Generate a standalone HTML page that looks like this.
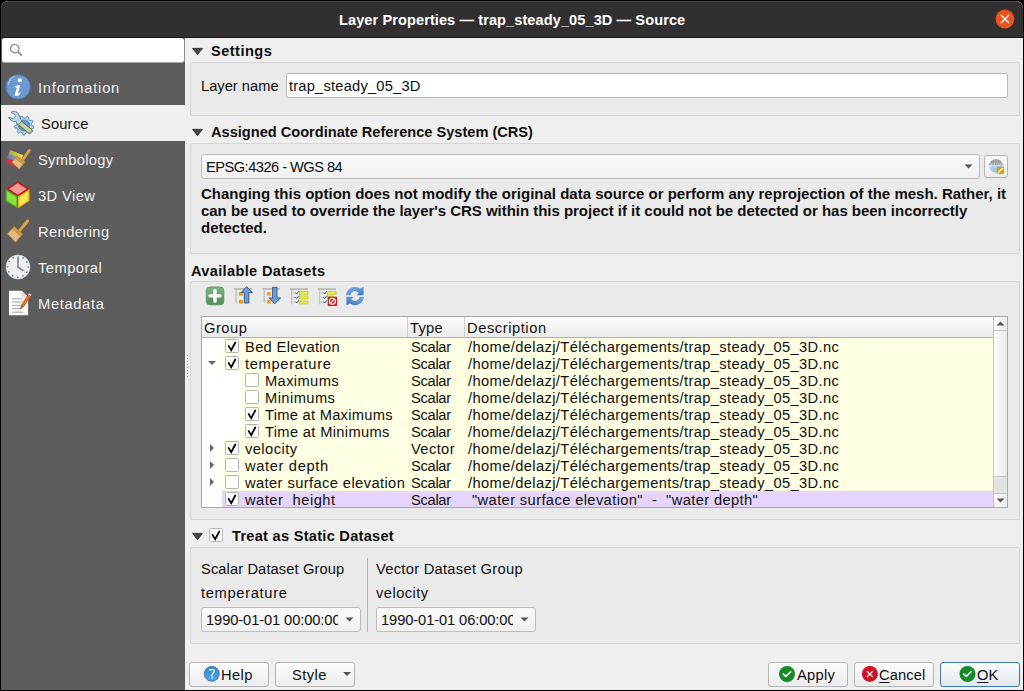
<!DOCTYPE html>
<html><head><meta charset="utf-8"><style>
*{box-sizing:border-box;margin:0;padding:0}
html,body{width:1024px;height:691px;overflow:hidden;background:#000}
body{position:relative;font-family:"Liberation Sans",sans-serif;font-size:14.7px;color:#101010}
.a{position:absolute}
.t{position:absolute;white-space:nowrap;line-height:1}
.b{font-weight:bold;font-size:14.6px}
.grp{position:absolute;background:#eaeaea;border:1px solid #d5d5d5;border-radius:2px}
.tri{position:absolute;width:12px;height:9px}
.inp{position:absolute;background:#fff;border:1px solid #b8b8b8;border-radius:2px}
.btn{position:absolute;background:linear-gradient(#fcfcfc,#ececec);border:1px solid #b5b5b5;border-radius:3px}
.combo{position:absolute;background:linear-gradient(#fbfbfb,#f0f0f0);border:1px solid #bcbcbc;border-radius:3px}
.darr{position:absolute;width:0;height:0;border-left:5px solid transparent;border-right:5px solid transparent;border-top:5px solid #555}
.st{color:#f2f2f2}
.cb{position:absolute;width:14px;height:14px;background:#fff;border:1px solid #b4b4b4;border-radius:1.5px}
.row{position:absolute;height:17px}
.yel{background:#ffffe4}
u{text-decoration-thickness:1px;text-underline-offset:2px}
</style></head><body>
<div class="a" style="left:1px;top:1px;width:1022px;height:689px;background:#efefef;border-radius:7px 7px 0 0"></div>
<div class="a" style="left:1px;top:1px;width:1022px;height:36px;background:#312f2f;border-top:1px solid #4a4848;border-radius:7px 7px 0 0"></div>
<div class="a" style="left:1px;top:37px;width:1022px;height:1px;background:#181818"></div>
<div class="t b" style="left:339px;top:13px;color:#fff;letter-spacing:0.07px">Layer Properties — trap_steady_05_3D — Source</div>
<svg class="a" style="left:990px;top:4px" width="30" height="30"><circle cx="15" cy="15" r="9.4" fill="#e95420"/><path d="M11 11L19 19M19 11L11 19" stroke="#fff" stroke-width="1.3"/></svg>
<div class="a" style="left:1px;top:38px;width:184px;height:652px;background:#5c5c5c"></div>
<div class="a" style="left:2px;top:38px;width:182px;height:25px;background:#fff;border-radius:3px;border-bottom:1px solid #a8a8a8"></div>
<div class="a" style="left:184px;top:38px;width:1px;height:24px;background:#8a8a8a"></div>
<svg class="a" style="left:8px;top:42px" width="18" height="18"><circle cx="6.8" cy="6.7" r="4.2" fill="none" stroke="#808080" stroke-width="1.2"/><path d="M10 9.8L13.8 13.6" stroke="#808080" stroke-width="1.6"/></svg>
<div class="a" style="left:1px;top:105px;width:184px;height:36px;background:#efefef"></div>
<div class="t st" style="left:38px;top:81px;letter-spacing:0.78px">Information</div>
<div class="t" style="left:41px;top:117px;color:#111;letter-spacing:0.16px">Source</div>
<div class="t st" style="left:38px;top:153px;letter-spacing:0.31px">Symbology</div>
<div class="t st" style="left:38px;top:189px;letter-spacing:0.4px">3D View</div>
<div class="t st" style="left:38px;top:225px;letter-spacing:0.41px">Rendering</div>
<div class="t st" style="left:38px;top:261px;letter-spacing:0.47px">Temporal</div>
<div class="t st" style="left:38px;top:297px;letter-spacing:0.66px">Metadata</div>
<svg class="a" style="left:0;top:69px" width="40" height="36"><circle cx="18.1" cy="17.9" r="12.2" fill="#6b9ad3" stroke="#4d7bb8" stroke-width="0.9"/><path d="M8.5 16a10 10 0 0 1 6-8.6" stroke="#9fc0e8" stroke-width="1.2" fill="none"/><circle cx="19.7" cy="11.3" r="2" fill="#fff"/><path d="M14.2 17.6Q17 16.3 20.3 16.3L17.9 24.6Q19.2 24.1 20.7 23L20.1 24.9Q18.6 26.9 15.9 27.1Q14.3 27.2 14.7 25.6L16.8 18.9Q15.6 18.6 14.2 17.6z" fill="#fff"/></svg>
<svg class="a" style="left:0;top:105px" width="40" height="36"><path d="M31.8 20.5 L33.7 21.5 L33.3 23.5 L31.1 23.6 L30.0 25.4 L30.9 27.4 L29.3 28.6 L27.5 27.3 L25.5 28.0 L24.9 30.1 L22.9 30.0 L22.4 27.9 L20.4 27.1 L18.6 28.3 L17.1 26.9 L18.1 25.0 L17.1 23.1 L14.9 22.8 L14.6 20.8 L16.6 20.0 L17.1 17.9 L15.6 16.3 L16.6 14.6 L18.7 15.2 L20.4 13.9 L20.3 11.7 L22.2 11.1 L23.4 12.9 L25.5 13.0 L26.8 11.3 L28.7 12.0 L28.4 14.2 L30.0 15.6 L32.2 15.1 L33.1 16.9 L31.5 18.4z" fill="#b4d2ea" stroke="#5b7f9e" stroke-width="0.8"/><circle cx="24.2" cy="20.5" r="5.6" fill="#5d9ad8" stroke="#3f6f9f" stroke-width="0.6"/><path d="M10.9 7.3Q13 5.8 15.6 6.5Q18.8 7.8 19.3 11L20.8 14.5L23 17.5L18.5 21.5L16.1 16.6Q13.5 16.9 11.8 15.7Q9.6 14.4 8.3 12.3Q10.3 12.2 11.8 13.4Q13.6 13.8 14.5 12.8Q15.5 11.4 15.3 10.5Q14.8 8.8 13.2 8.4Q11.8 8.1 10.9 7.3z" fill="#b9d7ec" stroke="#4f7390" stroke-width="0.8" stroke-linejoin="round"/><path d="M18.3 19.6L21.6 16.3L32.8 25.4L29.5 28.7z" fill="#c6d498" stroke="#4e5a3a" stroke-width="0.8" stroke-linejoin="round"/><path d="M29.6 28.6L32.7 25.5" stroke="#8a9aa0" stroke-width="2"/></svg>
<svg class="a" style="left:0;top:141px" width="40" height="36"><defs><linearGradient id="by" x1="0" y1="0" x2="1" y2="0"><stop offset="0" stop-color="#e8dc3a" stop-opacity="0.55"/><stop offset="1" stop-color="#f2e63a"/></linearGradient><linearGradient id="bb" x1="0" y1="0" x2="1" y2="0"><stop offset="0" stop-color="#78a6d8" stop-opacity="0.55"/><stop offset="1" stop-color="#7aa8e0"/></linearGradient><linearGradient id="br" x1="0" y1="0" x2="1" y2="0"><stop offset="0" stop-color="#e8302a" stop-opacity="0.6"/><stop offset="1" stop-color="#ff2020"/></linearGradient></defs><path d="M10.4 9.1L23.2 14.3L21.5 18.3L8.7 13.1z" fill="url(#by)"/><path d="M8.7 13.1L21.5 18.3L19.8 22.3L7 17.1z" fill="url(#bb)"/><path d="M7 17.1L19.8 22.3L18.6 27L5.2 21.3z" fill="url(#br)"/><defs><pattern id="h1" patternUnits="userSpaceOnUse" width="1.7" height="1.7" patternTransform="rotate(40)"><rect width="1.7" height="1.7" fill="#ecc890"/><path d="M0 0.2H1.7M0.2 0V1.7" stroke="#c99b5c" stroke-width="0.45"/></pattern></defs><path d="M22.6 19.2L29.2 9.4" stroke="#dca244" stroke-width="2.8" stroke-linecap="round"/><path d="M16.8 15.2L24.9 21L19.1 28L11.9 21.3z" fill="url(#h1)" stroke="#c08840" stroke-width="0.7" stroke-linejoin="round"/><path d="M16.8 15.2L24.9 21L23.2 23.1L15 17.3z" fill="#d49a44" stroke="#b07a30" stroke-width="0.5"/></svg>
<svg class="a" style="left:0;top:177px" width="40" height="36"><path d="M17.7 5.3L28 11.9L17.7 18.6L7.8 11.8z" fill="#f59898" stroke="#d41414" stroke-width="1.4" stroke-linejoin="round"/><path d="M6.3 13.2L16.9 19.8V30.3L6.3 23.7z" fill="#8ae23e" stroke="#56b022" stroke-width="1.3" stroke-linejoin="round"/><path d="M18.7 19.8L28.9 13.2V23.5L18.7 30.3z" fill="#ffe64e" stroke="#e6b41e" stroke-width="1.3" stroke-linejoin="round"/></svg>
<svg class="a" style="left:0;top:213px" width="40" height="36"><defs><pattern id="h2" patternUnits="userSpaceOnUse" width="1.7" height="1.7" patternTransform="rotate(45)"><rect width="1.7" height="1.7" fill="#ecc890"/><path d="M0 0.2H1.7M0.2 0V1.7" stroke="#c99b5c" stroke-width="0.45"/></pattern></defs><path d="M19.8 17.4L27.6 8" stroke="#dca244" stroke-width="3" stroke-linecap="round"/><path d="M14.2 13.8L22.3 21L15.6 29.2L7.4 20.8z" fill="url(#h2)" stroke="#c08840" stroke-width="0.7" stroke-linejoin="round"/><path d="M14.2 13.8L22.3 21L20.6 23.1L12.4 15.9z" fill="#d49a44" stroke="#b07a30" stroke-width="0.5"/></svg>
<svg class="a" style="left:0;top:249px" width="40" height="36"><circle cx="18" cy="18" r="12" fill="#efefef" stroke="#d8d8d8" stroke-width="0.6"/><circle cx="18" cy="18" r="10.3" fill="none" stroke="#4f82c4" stroke-width="1.6" stroke-dasharray="1.4 3.99" stroke-dashoffset="0.7" transform="rotate(-90 18 18)"/><path d="M18 8.2V18L23.4 21.8" stroke="#8a8a8a" stroke-width="1.8" fill="none"/></svg>
<svg class="a" style="left:0;top:285px" width="40" height="36"><path d="M9 5.7H21.7L28.1 12.1V30.3H9z" fill="#fbfbfb"/><path d="M21.7 5.7V12.1H28.1z" fill="#dcdcdc"/><path d="M11.9 13.8H22.5M11.9 17H21.5M11.9 20.4H20.3M11.9 23.7H22.5M11.9 27.2H23.2" stroke="#a4a4a4" stroke-width="1"/><path d="M20.2 23.8L21.5 19.8L28.2 9.5L30.6 11.1L23.9 21.4z" fill="#e8701e" stroke="#b04a0a" stroke-width="0.6" stroke-linejoin="round"/><path d="M28.2 9.5L29 8.3L31.4 9.9L30.6 11.1z" fill="#f4f4f4"/><path d="M20.2 23.8L21.5 19.8L23.9 21.4z" fill="#777"/></svg>
<svg class="a" style="left:186px;top:355px" width="3" height="22"><path d="M1.5 0V22" stroke="#a0a0a0" stroke-width="1" stroke-dasharray="1 2"/></svg>
<svg class="a" style="left:191px;top:47px" width="13" height="10"><path d="M1.6 1.4H11.4L6.5 7.6z" fill="#474747" stroke="#2a2a2a" stroke-width="0.9" stroke-linejoin="round"/></svg>
<div class="t b" style="left:211px;top:44px;letter-spacing:0.46px">Settings</div>
<div class="grp" style="left:190px;top:62px;width:830px;height:54px"></div>
<div class="t" style="left:201px;top:79px;">Layer name</div>
<div class="inp" style="left:286px;top:73px;width:722px;height:25px"></div>
<div class="t" style="left:289px;top:79px;letter-spacing:0.2px">trap_steady_05_3D</div>
<svg class="a" style="left:191px;top:128px" width="13" height="10"><path d="M1.6 1.4H11.4L6.5 7.6z" fill="#474747" stroke="#2a2a2a" stroke-width="0.9" stroke-linejoin="round"/></svg>
<div class="t b" style="left:211px;top:125px;">Assigned Coordinate Reference System (CRS)</div>
<div class="grp" style="left:190px;top:143px;width:830px;height:111px"></div>
<div class="combo" style="left:201px;top:154px;width:779px;height:25px"></div>
<div class="t" style="left:206px;top:160px;letter-spacing:-0.55px">EPSG:4326 - WGS 84</div>
<svg class="a" style="left:964px;top:164px" width="9" height="6"><path d="M0.5 0.5h8l-4 4z" fill="#555"/></svg>
<div class="btn" style="left:984px;top:155px;width:24px;height:23px"></div>
<svg class="a" style="left:984px;top:154px" width="24" height="24"><defs><linearGradient id="gd" x1="0" y1="0" x2="0" y2="1"><stop offset="0" stop-color="#9c9c9c"/><stop offset="1" stop-color="#d0d0d0"/></linearGradient><linearGradient id="gb" x1="0" y1="0" x2="1" y2="1"><stop offset="0" stop-color="#d2e8fc"/><stop offset="1" stop-color="#7aa4d8"/></linearGradient></defs><path d="M4.2 11.2L7 7Q8.6 5.2 12 5.2Q15.4 5.2 17 7L20 11.2z" fill="url(#gd)"/><path d="M7 8.2H17M5.6 10H18.6M9.5 5.8L8.5 11M12 5.2V11M14.5 5.8L15.5 11" stroke="#6a6a6a" stroke-width="0.6" stroke-dasharray="0.9 0.9"/><path d="M4.6 11.2A7.6 7.6 0 0 0 19.8 11.2z" fill="url(#gb)"/><path d="M6 14H13M9 11.5V18" stroke="#9cbce4" stroke-width="0.6"/><rect x="12.8" y="12.7" width="7.3" height="7.3" rx="1" fill="#d2a600"/><path d="M14.3 18.4L18.7 14.2" stroke="#fff" stroke-width="1.4" stroke-linecap="round"/></svg>
<div class="t b" style="left:201px;top:186px;font-size:15px">Changing this option does not modify the original data source or perform any reprojection of the mesh. Rather, it</div>
<div class="t b" style="left:201px;top:203px;font-size:15px;letter-spacing:-0.03px">can be used to override the layer's CRS within this project if it could not be detected or has been incorrectly</div>
<div class="t b" style="left:201px;top:220px;font-size:15px">detected.</div>
<div class="t b" style="left:191px;top:264px;letter-spacing:0.33px">Available Datasets</div>
<div class="grp" style="left:190px;top:281px;width:830px;height:239px"></div>
<svg class="a" style="left:200px;top:282px" width="170" height="28"><defs><linearGradient id="gp" x1="0" y1="0" x2="0" y2="1"><stop offset="0" stop-color="#82b284"/><stop offset="0.5" stop-color="#6aa26d"/><stop offset="0.5" stop-color="#5b965e"/><stop offset="1" stop-color="#5a945c"/></linearGradient><linearGradient id="gr" x1="0" y1="0" x2="1" y2="1"><stop offset="0" stop-color="#8ab6e2"/><stop offset="1" stop-color="#3f7cc4"/></linearGradient><linearGradient id="gr2" x1="1" y1="0" x2="0" y2="1"><stop offset="0" stop-color="#7aaade"/><stop offset="1" stop-color="#3a78c0"/></linearGradient></defs><rect x="6.3" y="5" width="17.5" height="17.8" rx="3.6" fill="url(#gp)" stroke="#54905a" stroke-width="0.8"/><path d="M10 13.9H20M15 8.6V19.2" stroke="#fff" stroke-width="3.4" stroke-linecap="round"/><path d="M34.1 6.9H51.9" stroke="#b9b9b2" stroke-width="1.7"/><path d="M36 7.5V21" stroke="#c4c4c4" stroke-width="1.5"/><path d="M36.5 12H39M36.5 19.7H39" stroke="#c8c8c8" stroke-width="0.8"/><rect x="39" y="10.1" width="3.8" height="3.6" fill="#f59a1e"/><rect x="39" y="17.8" width="3.8" height="3.8" fill="#f59a1e"/><path d="M46.7 4.6L52.5 10.6H48.9V21H44.3V10.6H41.1z" fill="#6c9dd0" stroke="#2f5b8a" stroke-width="0.9" stroke-linejoin="round"/><path d="M62.3 6.9H79.8" stroke="#b9b9b2" stroke-width="1.7"/><path d="M64.2 7.5V21" stroke="#c4c4c4" stroke-width="1.5"/><path d="M64.7 12H67.2M64.7 19.7H67.2" stroke="#c8c8c8" stroke-width="0.8"/><rect x="67.2" y="10.1" width="3.5" height="3.6" fill="#f59a1e"/><rect x="67.2" y="17.8" width="3.5" height="3.8" fill="#f59a1e"/><path d="M72.5 5.3H77V15.9H80.6L74.7 21.8L69.2 15.9H72.5z" fill="#6c9dd0" stroke="#2f5b8a" stroke-width="0.9" stroke-linejoin="round"/><path d="M89.9 7.1H108" stroke="#b5b5ae" stroke-width="1.6"/><path d="M91.6 7.8V22.3" stroke="#c4c4c4" stroke-width="1.4"/><path d="M92.3 11H95M92.3 15.5H95M92.3 20H95" stroke="#bbb" stroke-width="0.8"/><path d="M95.3 10.5L96.6 12L99 9.2M95.3 15L96.6 16.5L99 13.7M95.3 19.5L96.6 21L99 18.2" stroke="#35608e" stroke-width="1" fill="none"/><rect x="99.3" y="9.3" width="8.7" height="3" fill="#ecea3c" stroke="#b8c832" stroke-width="0.7"/><rect x="99.3" y="14" width="8.7" height="3" fill="#ecea3c" stroke="#b8c832" stroke-width="0.7"/><rect x="99.3" y="19" width="8.7" height="3" fill="#ecea3c" stroke="#b8c832" stroke-width="0.7"/><path d="M117.9 7.1H136" stroke="#b5b5ae" stroke-width="1.6"/><path d="M119.6 7.8V22.3" stroke="#c4c4c4" stroke-width="1.4"/><path d="M120.3 11H123M120.3 15.5H123M120.3 20H123" stroke="#bbb" stroke-width="0.8"/><path d="M123.3 10.5L124.6 12L127 9.2M123.3 15L124.6 16.5L127 13.7M123.3 19.5L124.6 21L127 18.2" stroke="#35608e" stroke-width="1" fill="none"/><rect x="127.3" y="9.3" width="8.7" height="3" fill="#ecea3c" stroke="#b8c832" stroke-width="0.7"/><rect x="127.3" y="14" width="6" height="3" fill="#ecea3c" stroke="#b8c832" stroke-width="0.7"/><rect x="127.7" y="14.7" width="9.4" height="9.3" fill="#d8201e"/><circle cx="132.4" cy="19.3" r="3" fill="none" stroke="#fff" stroke-width="1.1"/><path d="M130.4 21.3L134.4 17.3" stroke="#fff" stroke-width="1.1"/><path d="M146 13.3A9 9 0 0 1 160.2 6.6L163.6 4.7V13.3H156.5L158.6 10.8A4.8 4.8 0 0 0 150.2 13.3Z" fill="url(#gr)"/><path d="M164 14.7A9 9 0 0 1 149.8 21.4L146.4 23.3V14.7H153.5L151.4 17.2A4.8 4.8 0 0 0 159.8 14.7Z" fill="url(#gr2)"/></svg>
<div class="a" style="left:201px;top:316px;width:807px;height:192px;background:#fff;border:1px solid #a8a8a8"></div>
<div class="a" style="left:202px;top:317px;width:791px;height:21px;background:linear-gradient(#fdfdfd,#ebebeb);border-bottom:1px solid #b0b0b0"></div>
<div class="a" style="left:407px;top:317px;width:1px;height:20px;background:#cfcfcf"></div>
<div class="a" style="left:464px;top:317px;width:1px;height:20px;background:#cfcfcf"></div>
<div class="t" style="left:204px;top:321px;letter-spacing:0.5px">Group</div>
<div class="t" style="left:410px;top:321px;letter-spacing:0.3px">Type</div>
<div class="t" style="left:467px;top:321px;letter-spacing:0.56px">Description</div>
<div class="row yel" style="left:222px;top:338px;width:771px"></div>
<div class="row yel" style="left:222px;top:355px;width:771px"></div>
<div class="row yel" style="left:242px;top:372px;width:751px"></div>
<div class="row yel" style="left:242px;top:389px;width:751px"></div>
<div class="row yel" style="left:242px;top:406px;width:751px"></div>
<div class="row yel" style="left:242px;top:423px;width:751px"></div>
<div class="row yel" style="left:222px;top:440px;width:771px"></div>
<div class="row yel" style="left:222px;top:457px;width:771px"></div>
<div class="row yel" style="left:222px;top:474px;width:771px"></div>
<div class="row" style="left:222px;top:491px;width:771px;height:16px;background:#e5d5fa"></div>
<div class="cb" style="left:225px;top:339px"><svg width="12" height="12" style="position:absolute;left:0;top:0"><path d="M2.6 5.9L5.2 10.1L9.3 2.5" stroke="#000" stroke-width="1.8" stroke-linecap="round" fill="none"/></svg></div>
<div class="t" style="left:245px;top:340px;letter-spacing:0.33px">Bed Elevation</div>
<div class="t" style="left:411px;top:340px;letter-spacing:-0.3px">Scalar</div>
<div class="t" style="left:468px;top:340px;letter-spacing:0.38px">/home/delazj/Téléchargements/trap_steady_05_3D.nc</div>
<svg class="a" style="left:206px;top:358px" width="12" height="10"><path d="M2 3h8l-4 4z" fill="#666"/></svg>
<div class="cb" style="left:225px;top:356px"><svg width="12" height="12" style="position:absolute;left:0;top:0"><path d="M2.6 5.9L5.2 10.1L9.3 2.5" stroke="#000" stroke-width="1.8" stroke-linecap="round" fill="none"/></svg></div>
<div class="t" style="left:245px;top:357px;letter-spacing:0.67px">temperature</div>
<div class="t" style="left:411px;top:357px;letter-spacing:-0.3px">Scalar</div>
<div class="t" style="left:468px;top:357px;letter-spacing:0.38px">/home/delazj/Téléchargements/trap_steady_05_3D.nc</div>
<div class="cb" style="left:245px;top:373px"></div>
<div class="t" style="left:265px;top:374px;letter-spacing:0.37px">Maximums</div>
<div class="t" style="left:411px;top:374px;letter-spacing:-0.3px">Scalar</div>
<div class="t" style="left:468px;top:374px;letter-spacing:0.38px">/home/delazj/Téléchargements/trap_steady_05_3D.nc</div>
<div class="cb" style="left:245px;top:390px"></div>
<div class="t" style="left:265px;top:391px;letter-spacing:0.43px">Minimums</div>
<div class="t" style="left:411px;top:391px;letter-spacing:-0.3px">Scalar</div>
<div class="t" style="left:468px;top:391px;letter-spacing:0.38px">/home/delazj/Téléchargements/trap_steady_05_3D.nc</div>
<div class="cb" style="left:245px;top:407px"><svg width="12" height="12" style="position:absolute;left:0;top:0"><path d="M2.6 5.9L5.2 10.1L9.3 2.5" stroke="#000" stroke-width="1.8" stroke-linecap="round" fill="none"/></svg></div>
<div class="t" style="left:265px;top:408px;letter-spacing:0.27px">Time at Maximums</div>
<div class="t" style="left:411px;top:408px;letter-spacing:-0.3px">Scalar</div>
<div class="t" style="left:468px;top:408px;letter-spacing:0.38px">/home/delazj/Téléchargements/trap_steady_05_3D.nc</div>
<div class="cb" style="left:245px;top:424px"><svg width="12" height="12" style="position:absolute;left:0;top:0"><path d="M2.6 5.9L5.2 10.1L9.3 2.5" stroke="#000" stroke-width="1.8" stroke-linecap="round" fill="none"/></svg></div>
<div class="t" style="left:265px;top:425px;letter-spacing:0.33px">Time at Minimums</div>
<div class="t" style="left:411px;top:425px;letter-spacing:-0.3px">Scalar</div>
<div class="t" style="left:468px;top:425px;letter-spacing:0.38px">/home/delazj/Téléchargements/trap_steady_05_3D.nc</div>
<svg class="a" style="left:207px;top:442px" width="10" height="12"><path d="M3 2v8l4-4z" fill="#666"/></svg>
<div class="cb" style="left:225px;top:441px"><svg width="12" height="12" style="position:absolute;left:0;top:0"><path d="M2.6 5.9L5.2 10.1L9.3 2.5" stroke="#000" stroke-width="1.8" stroke-linecap="round" fill="none"/></svg></div>
<div class="t" style="left:245px;top:442px;letter-spacing:0.43px">velocity</div>
<div class="t" style="left:411px;top:442px;letter-spacing:0.38px">Vector</div>
<div class="t" style="left:468px;top:442px;letter-spacing:0.38px">/home/delazj/Téléchargements/trap_steady_05_3D.nc</div>
<svg class="a" style="left:207px;top:459px" width="10" height="12"><path d="M3 2v8l4-4z" fill="#666"/></svg>
<div class="cb" style="left:225px;top:458px"></div>
<div class="t" style="left:245px;top:459px;letter-spacing:0.64px">water depth</div>
<div class="t" style="left:411px;top:459px;letter-spacing:-0.3px">Scalar</div>
<div class="t" style="left:468px;top:459px;letter-spacing:0.38px">/home/delazj/Téléchargements/trap_steady_05_3D.nc</div>
<svg class="a" style="left:207px;top:476px" width="10" height="12"><path d="M3 2v8l4-4z" fill="#666"/></svg>
<div class="cb" style="left:225px;top:475px"></div>
<div class="t" style="left:245px;top:476px;letter-spacing:0.4px">water surface elevation</div>
<div class="t" style="left:411px;top:476px;letter-spacing:-0.3px">Scalar</div>
<div class="t" style="left:468px;top:476px;letter-spacing:0.38px">/home/delazj/Téléchargements/trap_steady_05_3D.nc</div>
<div class="cb" style="left:225px;top:492px"><svg width="12" height="12" style="position:absolute;left:0;top:0"><path d="M2.6 5.9L5.2 10.1L9.3 2.5" stroke="#000" stroke-width="1.8" stroke-linecap="round" fill="none"/></svg></div>
<div class="t" style="left:245px;top:493px;letter-spacing:0.5px">water&nbsp; height</div>
<div class="t" style="left:411px;top:493px;letter-spacing:-0.3px">Scalar</div>
<div class="t" style="left:472px;top:493px;letter-spacing:0.38px">"water surface elevation"&nbsp; -&nbsp; "water depth"</div>
<div class="a" style="left:993px;top:317px;width:14px;height:190px;background:linear-gradient(90deg,#fdfdfd,#e9e9e9);border-left:1px solid #c4c4c4"></div>
<div class="a" style="left:994px;top:330px;width:13px;height:1px;background:#c4c4c4"></div>
<div class="a" style="left:994px;top:476px;width:13px;height:17px;background:#e3e3e3;border-top:1px solid #c4c4c4"></div>
<div class="a" style="left:994px;top:493px;width:13px;height:1px;background:#c4c4c4"></div>
<svg class="a" style="left:994px;top:317px" width="13" height="13"><path d="M2.5 8.5h8L6.5 4.5z" fill="#555"/></svg>
<svg class="a" style="left:994px;top:494px" width="13" height="13"><path d="M2.5 4.5h8l-4 4z" fill="#555"/></svg>
<svg class="a" style="left:191px;top:532px" width="13" height="10"><path d="M1.6 1.4H11.4L6.5 7.6z" fill="#474747" stroke="#2a2a2a" stroke-width="0.9" stroke-linejoin="round"/></svg>
<div class="cb" style="left:209px;top:528px"><svg width="12" height="12" style="position:absolute;left:0;top:0"><path d="M2.6 5.9L5.2 10.1L9.3 2.5" stroke="#000" stroke-width="1.8" stroke-linecap="round" fill="none"/></svg></div>
<div class="t b" style="left:232px;top:529px;letter-spacing:0.27px">Treat as Static Dataset</div>
<div class="grp" style="left:190px;top:547px;width:830px;height:97px"></div>
<div class="t" style="left:201px;top:562px;letter-spacing:0.1px">Scalar Dataset Group</div>
<div class="t" style="left:201px;top:586px;letter-spacing:0.67px">temperature</div>
<div class="combo" style="left:201px;top:607px;width:160px;height:25px"></div>
<div class="t" style="left:206px;top:613px;width:132px;overflow:hidden;letter-spacing:-0.1px">1990-01-01 00:00:00</div>
<svg class="a" style="left:345px;top:617px" width="9" height="6"><path d="M0.5 0.5h8l-4 4z" fill="#555"/></svg>
<div class="a" style="left:367px;top:558px;width:1px;height:74px;background:#b4b4b4"></div>
<div class="t" style="left:376px;top:562px;letter-spacing:0.28px">Vector Dataset Group</div>
<div class="t" style="left:376px;top:586px;letter-spacing:0.45px">velocity</div>
<div class="combo" style="left:376px;top:607px;width:160px;height:25px"></div>
<div class="t" style="left:381px;top:613px;width:132px;overflow:hidden;letter-spacing:-0.1px">1990-01-01 06:00:00</div>
<svg class="a" style="left:520px;top:617px" width="9" height="6"><path d="M0.5 0.5h8l-4 4z" fill="#555"/></svg>
<div class="btn" style="left:189px;top:662px;width:80px;height:25px"></div>
<svg class="a" style="left:204px;top:666px" width="16" height="16"><defs><linearGradient id="gh" x1="0" y1="0" x2="0" y2="1"><stop offset="0" stop-color="#2f86d6"/><stop offset="1" stop-color="#58a8ea"/></linearGradient></defs><circle cx="7.8" cy="7.8" r="7.4" fill="url(#gh)" stroke="#2d5f94" stroke-width="0.8"/><path d="M5.6 4.1Q8 3 9.9 3.8Q10.9 4.8 9.8 6.4L8 8.7V9.9" stroke="#f2f8ff" stroke-width="1.3" fill="none" stroke-linecap="round"/><rect x="7.2" y="11.1" width="1.6" height="1.6" fill="#cfe4f8"/></svg>
<div class="t" style="left:221px;top:668px;letter-spacing:0.37px">Help</div>
<div class="btn" style="left:275px;top:662px;width:80px;height:25px"></div>
<div class="t" style="left:292px;top:668px;letter-spacing:0.45px">Style</div>
<div class="darr" style="left:343px;top:672px;border-left-width:4px;border-right-width:4px;border-top-width:4px"></div>
<div class="btn" style="left:768px;top:662px;width:80px;height:25px"></div>
<svg class="a" style="left:778px;top:666px" width="18" height="17"><circle cx="9" cy="8" r="8" fill="#178a2a"/><path d="M4.8 7.6L7.9 10.4L13.1 5.2" stroke="#fff" stroke-width="1.6" fill="none"/></svg>
<div class="t" style="left:797px;top:668px;letter-spacing:0.3px">Apply</div>
<div class="btn" style="left:854px;top:662px;width:80px;height:25px"></div>
<svg class="a" style="left:861px;top:666px" width="18" height="17"><circle cx="8.9" cy="7.9" r="8" fill="#cc1426"/><path d="M6 5.3L11.8 10.9M11.8 5.3L6 10.9" stroke="#fff" stroke-width="1.3"/></svg>
<div class="t" style="left:879px;top:668px;letter-spacing:0.12px"><u>C</u>ancel</div>
<div class="btn" style="left:940px;top:662px;width:80px;height:25px;border-color:#3d79ae;background:linear-gradient(#fbfcfd,#e2e8ee)"></div>
<svg class="a" style="left:959px;top:666px" width="18" height="17"><circle cx="8.5" cy="8" r="8" fill="#178a2a"/><path d="M4.3 7.6L7.4 10.4L12.6 5.2" stroke="#fff" stroke-width="1.6" fill="none"/></svg>
<div class="t" style="left:977px;top:668px;letter-spacing:0px"><u>O</u>K</div>
</body></html>
